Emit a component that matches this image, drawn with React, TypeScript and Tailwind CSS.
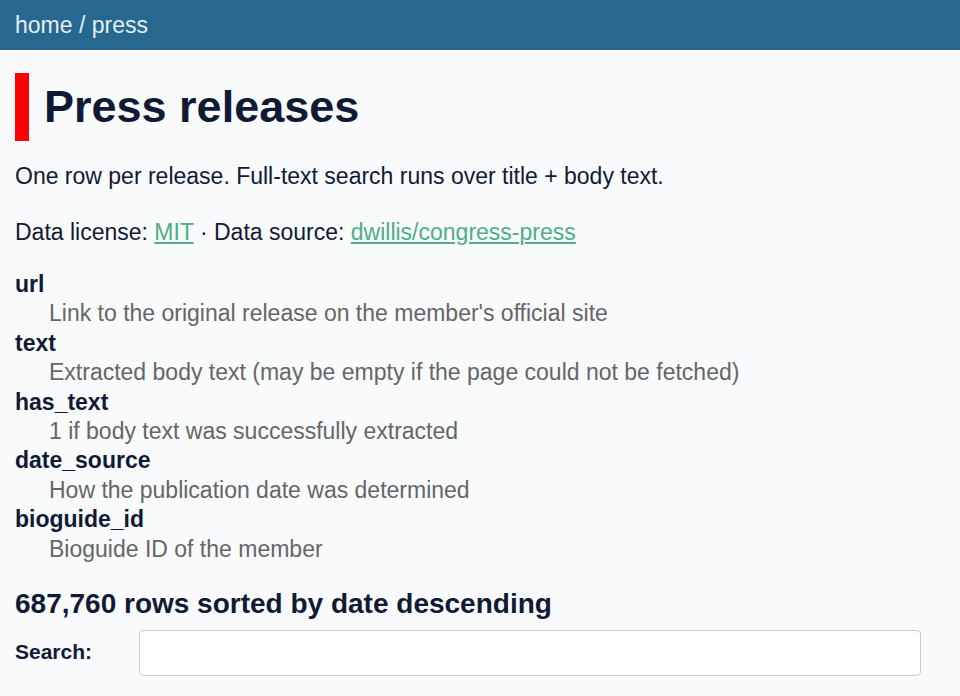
const columns = [
  { name: 'url', desc: "Link to the original release on the member's official site" },
  { name: 'text', desc: 'Extracted body text (may be empty if the page could not be fetched)' },
  { name: 'has_text', desc: '1 if body text was successfully extracted' },
  { name: 'date_source', desc: 'How the publication date was determined' },
  { name: 'bioguide_id', desc: 'Bioguide ID of the member' },
];

export default function App() {
  return (
    <div className="min-h-[696px] bg-[#f8fafb] text-[#111a35] font-['Liberation_Sans',Arial,sans-serif]">
      <header className="h-[50px] bg-[#276890] px-[15px] flex items-center">
        <p className="text-[23px] text-[#e3edf3]">
          <a href="#">home</a> / <a href="#">press</a>
        </p>
      </header>
      <section className="px-[15px]">
        <h1 className="mt-[23px] border-l-[14px] border-[#ff0000] pl-[15px] text-[45px] font-bold leading-[68px]">
          Press releases
        </h1>
        <p className="mt-[21px] text-[23px] leading-[29px]">
          One row per release. Full-text search runs over title + body text.
        </p>
        <p className="mt-[27px] text-[23px] leading-[29px]">
          Data license: <a href="#" className="text-[#4fae86] underline">MIT</a> · Data source:{' '}
          <a href="#" className="text-[#4fae86] underline">dwillis/congress-press</a>
        </p>
        <dl className="mt-[23px] text-[23px] leading-[29.4px]">
          {columns.map((c) => (
            <div key={c.name}>
              <dt className="font-bold">{c.name}</dt>
              <dd className="pl-[34px] text-[#666]">{c.desc}</dd>
            </div>
          ))}
        </dl>
        <h3 className="mt-[22px] text-[28px] font-bold leading-[36px]">687,760 rows sorted by date descending</h3>
        <form className="mt-[8px] flex items-center">
          <label className="w-[124px] pb-[3px] text-[21px] font-bold">Search:</label>
          <input
            type="search"
            className="h-[46px] w-[782px] rounded-[4px] border border-[#ccc] bg-white px-2 text-[20px]"
          />
        </form>
      </section>
    </div>
  );
}
